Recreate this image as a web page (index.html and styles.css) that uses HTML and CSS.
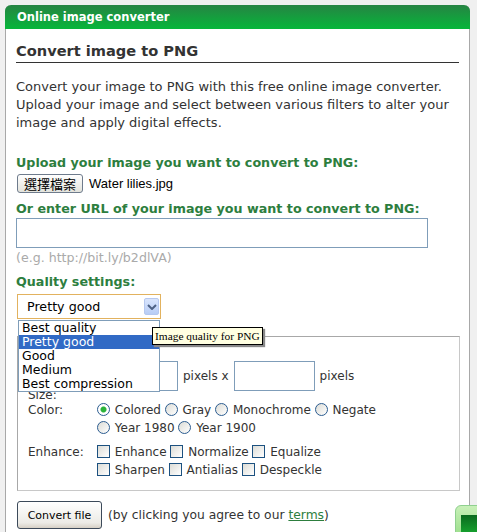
FILE: index.html
```html
<!DOCTYPE html>
<html lang="en">
<head>
<meta charset="UTF-8" />
<title>Convert image to PNG</title>
<link rel="stylesheet" href="styles.css">
</head>
<body>
  <div class="card">
    <div class="card-head">Online image converter</div>
    <div class="card-body">
      <h2>Convert image to PNG</h2>
      <p class="intro">Convert your image to PNG with this free online image converter. Upload your image and select between various filters to alter your image and apply digital effects.</p>

      <div class="label">Upload your image you want to convert to PNG:</div>
      <div class="file-row">
        <span class="file-btn">選擇檔案</span>
        <span class="file-name">Water lilies.jpg</span>
      </div>

      <div class="label">Or enter URL of your image you want to convert to PNG:</div>
      <input class="url" type="text" />
      <div class="hint">(e.g. http://bit.ly/b2dlVA)</div>

      <div class="label">Quality settings:</div>
      <div class="quality">
        <div class="select">
          <span>Pretty good</span>
          <span class="arrow">
            <svg viewBox="0 0 10 6" width="10" height="6"><path d="M1 1 L5 5 L9 1" fill="none" stroke="#4d6185" stroke-width="2"/></svg>
          </span>
        </div>
        <ul class="options">
          <li>Best quality</li>
          <li class="on">Pretty good</li>
          <li>Good</li>
          <li>Medium</li>
          <li>Best compression</li>
        </ul>
        <div class="tip">Image quality for PNG</div>
      </div>

      <fieldset class="opts">
        <div class="row size">
          <span class="name">Size:</span>
          <div class="vals">
            <input class="px" type="text" /> pixels x <input class="px" type="text" /> pixels
          </div>
        </div>
        <div class="row">
          <span class="name">Color:</span>
          <div class="vals">
            <label><input type="radio" name="c" checked /> Colored</label>
            <label><input type="radio" name="c" /> Gray</label>
            <label><input type="radio" name="c" /> Monochrome</label>
            <label><input type="radio" name="c" /> Negate</label>
            <label><input type="radio" name="c" /> Year 1980</label>
            <label><input type="radio" name="c" /> Year 1900</label>
          </div>
        </div>
        <div class="row">
          <span class="name">Enhance:</span>
          <div class="vals">
            <label><input type="checkbox" /> Enhance</label>
            <label><input type="checkbox" /> Normalize</label>
            <label><input type="checkbox" /> Equalize</label>
            <label><input type="checkbox" /> Sharpen</label>
            <label><input type="checkbox" /> Antialias</label>
            <label><input type="checkbox" /> Despeckle</label>
          </div>
        </div>
      </fieldset>

      <div class="submit">
        <button class="convert">Convert file</button>
        <span>(by clicking you agree to our <a href="#">terms</a>)</span>
      </div>
    </div>
  </div>
  <div class="feedback"><span class="fb-icon"></span></div>
</body>
</html>
```

FILE: styles.css
```css
html, body {
  margin: 0;
  padding: 0;
}
body {
  background: #f0f0f0;
  font-family: 'DejaVu Sans', Verdana, sans-serif;
  font-size: 12px;
  color: #333;
  height: 532px;
  overflow: hidden;
  position: relative;
}
.card {
  margin: 5px 0 0 5px;
  width: 465px;
  box-sizing: border-box;
  background: #fff;
  border-left: 1px solid #a8a8a8;
  border-right: 1px solid #a8a8a8;
  border-radius: 6px 6px 0 0;
  min-height: 540px;
}
.card-head {
  height: 24px;
  line-height: 24px;
  margin: 0 -1px;
  padding-left: 12px;
  border-radius: 6px 6px 0 0;
  background: linear-gradient(#268443, #06b63a);
  color: #fff;
  font-weight: bold;
  font-size: 11.5px;
}
.card-body {
  padding: 0 10px;
}
h2 {
  margin: 12px 0 0;
  padding-bottom: 1px;
  font-size: 14.6px;
  line-height: 20px;
  color: #333;
  border-bottom: 1px solid #333;
}
.intro {
  margin: 15px 0 0;
  font-size: 13px;
  line-height: 18px;
  color: #333;
}
.label {
  margin-top: 23px;
  color: #2d7e3e;
  font-weight: bold;
  font-size: 12.7px;
  line-height: 16px;
}
.file-row {
  display: flex;
  align-items: center;
  gap: 6px;
  margin-top: 3px;
  font-family: 'Liberation Sans', Arial, sans-serif;
  font-size: 13px;
  color: #000;
}
.file-btn {
  display: inline-block;
  padding: 0 6px;
  height: 17px;
  line-height: 17px;
  font-family: 'Noto Sans CJK TC', sans-serif;
  font-size: 13px;
  border: 1px solid #6e7b8c;
  border-radius: 3px;
  background: linear-gradient(#fff, #e3e3dc);
  margin-left: 1px;
}
.file-row + .label {
  margin-top: 8px;
}
.url {
  display: block;
  box-sizing: border-box;
  width: 412px;
  height: 30px;
  margin: 1px 0 0;
  border: 1px solid #7f9db9;
  background: #fff;
}
.hint {
  color: #aaa;
  font-size: 12.6px;
  line-height: 18px;
  margin-top: 1px;
}
.hint + .label {
  margin-top: 7px;
}
.quality {
  position: relative;
  margin-top: 4px;
  height: 25px;
}
.select {
  box-sizing: border-box;
  width: 144px;
  height: 25px;
  margin-left: 1px;
  border: 1px solid #e2b25e;
  display: flex;
  align-items: center;
  justify-content: space-between;
  padding: 0 1px 0 9px;
  color: #000;
  font-size: 12.7px;
}
.arrow {
  width: 15px;
  height: 17px;
  background: linear-gradient(#d9e5fd, #b8cdf6);
  border: 1px solid #b6c8ef;
  border-radius: 2px;
  display: flex;
  align-items: center;
  justify-content: center;
  box-sizing: border-box;
}
.options {
  position: absolute;
  left: 2px;
  top: 26px;
  z-index: 5;
  width: 142px;
  box-sizing: border-box;
  margin: 0;
  padding: 0;
  list-style: none;
  background: #fff;
  border: 1px solid #7f9db9;
  color: #000;
  font-size: 12.5px;
}
.options li {
  line-height: 14px;
  padding-left: 3px;
}
.options li.on {
  background: #316ac5;
  color: #fff;
}
.tip {
  position: absolute;
  left: 136px;
  top: 33px;
  z-index: 6;
  padding: 1px 2px;
  background: #ffffe1;
  border: 1px solid #000;
  font-family: 'Liberation Serif', 'Times New Roman', serif;
  font-size: 11.4px;
  line-height: 14px;
  color: #000;
  box-shadow: 2px 2px 1px #888;
  white-space: nowrap;
}
.opts {
  margin: 17px 0 0 1px;
  padding: 24px 10px 11px;
  width: 443px;
  box-sizing: border-box;
  border: 1px solid #a8a8a8;
  border-right-color: #c8c8c8;
  border-bottom-color: #c8c8c8;
}
.row {
  display: grid;
  grid-template-columns: 69px 288px;
  line-height: 18px;
  margin-bottom: 6px;
}
.row:last-child {
  margin-bottom: 0;
}
.name {
  color: #333;
}
.size {
  align-items: end;
  margin-bottom: 10px;
}
.size .name {
  position: relative;
  top: 13px;
}
.size .vals {
  display: flex;
  align-items: center;
  gap: 5px;
  white-space: nowrap;
}
.px {
  width: 81px;
  height: 30px;
  flex: none;
  box-sizing: border-box;
  border: 1px solid #7f9db9;
  margin: 0;
}
.vals label {
  white-space: nowrap;
}
.vals input[type=radio],
.vals input[type=checkbox] {
  appearance: none;
  -webkit-appearance: none;
  width: 13px;
  height: 13px;
  margin: 0 1px 0 0;
  vertical-align: -2px;
  border: 1px solid #1c5180;
  background: linear-gradient(135deg, #dcdcd6, #fff);
  box-sizing: border-box;
}
.vals input[type=radio] {
  border-radius: 50%;
  border-color: #2b5c90;
}
.vals input[type=radio]:checked {
  background: radial-gradient(circle, #2bb33a 0 2.5px, #fff 3.5px), #fff;
}
.submit {
  margin-top: 10px;
  display: flex;
  align-items: center;
  gap: 6px;
  font-size: 12.3px;
}
.convert {
  margin-left: 1px;
  width: 85px;
  height: 28px;
  font-family: 'DejaVu Sans', Verdana, sans-serif;
  font-size: 11px;
  color: #000;
  border: 1px solid #3c4a5a;
  border-radius: 3px;
  background: linear-gradient(#fff, #ecebe6 80%, #d6d0c5);
  padding: 0;
}
.submit a {
  color: #2d7e3e;
}
.feedback {
  position: absolute;
  left: 455px;
  top: 505px;
  width: 30px;
  height: 40px;
  border: 1px solid #8fd08f;
  border-radius: 6px 0 0 0;
  background: linear-gradient(#c8f0b8, #8ad87a);
}
.fb-icon {
  position: absolute;
  left: 5px;
  top: 9px;
  width: 17px;
  height: 20px;
  background: linear-gradient(#0a6a1e, #18a830);
}
```
